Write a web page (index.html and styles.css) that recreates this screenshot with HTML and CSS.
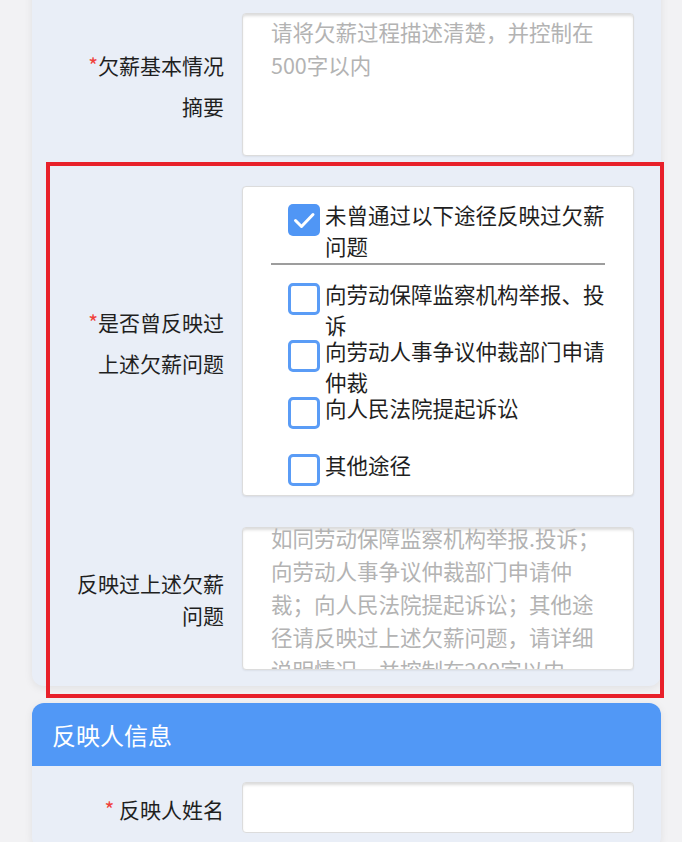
FILE: index.html
```html
<!DOCTYPE html>
<html lang="zh-CN">
<head>
  <meta charset="UTF-8">
  <title>欠薪投诉</title>
  <link rel="stylesheet" href="styles.css">
</head>
<body>
  <section class="card card-top">
    <div class="row">
      <div class="label"><span class="req">*</span>欠薪基本情况摘要</div>
      <div class="textarea">
        <div class="placeholder">请将欠薪过程描述清楚，并控制在500字以内</div>
      </div>
    </div>

    <div class="highlight">
      <div class="row">
        <div class="label"><span class="req">*</span>是否曾反映过上述欠薪问题</div>
        <div class="choices">
          <div class="choice choice-first">
            <span class="check checked">
              <svg viewBox="0 0 32 32" width="32" height="32"><path d="M7.5 16.5 L13.5 22.5 L25 10.5" fill="none" stroke="#fff" stroke-width="3" stroke-linecap="round" stroke-linejoin="round"/></svg>
            </span>
            <span class="choice-text">未曾通过以下途径反映过欠薪问题</span>
          </div>
          <div class="divider"></div>
          <div class="choice">
            <span class="check"></span>
            <span class="choice-text">向劳动保障监察机构举报、投诉</span>
          </div>
          <div class="choice">
            <span class="check"></span>
            <span class="choice-text">向劳动人事争议仲裁部门申请仲裁</span>
          </div>
          <div class="choice">
            <span class="check"></span>
            <span class="choice-text">向人民法院提起诉讼</span>
          </div>
          <div class="choice choice-last">
            <span class="check"></span>
            <span class="choice-text">其他途径</span>
          </div>
        </div>
      </div>

      <div class="row">
        <div class="label label-tight">反映过上述欠薪问题</div>
        <div class="textarea">
          <div class="placeholder scrolled">如同劳动保障监察机构举报.投诉；向劳动人事争议仲裁部门申请仲裁；向人民法院提起诉讼；其他途径请反映过上述欠薪问题，请详细说明情况，并控制在200字以内</div>
        </div>
      </div>
    </div>
  </section>

  <section class="card">
    <div class="card-head">反映人信息</div>
    <div class="card-body">
      <div class="row">
        <div class="label"><span class="req">*</span> 反映人姓名</div>
        <div class="input"></div>
      </div>
    </div>
  </section>
</body>
</html>
```

FILE: styles.css
```css
body {
  margin: 0;
  background-color: #f2f2f4;
  font-family: "Noto Sans CJK SC", "Noto Sans", sans-serif;
  color: #1f1f1f;
}
.card {
  width: 629px;
  margin-left: 32px;
  background: #e9eef7;
  border-radius: 12px;
  box-shadow: 0 2px 8px rgba(0, 0, 0, 0.08);
  overflow: visible;
}
.card-top {
  margin-top: -20px;
  padding: 33px 0 16px;
  display: flex;
  flex-direction: column;
  gap: 30px;
}
.card + .card {
  margin-top: 17px;
}
.card-head {
  height: 63px;
  line-height: 63px;
  padding-left: 20px;
  background: #5198f6;
  color: #fff;
  font-size: 24px;
  border-radius: 12px 12px 0 0;
}
.card-body {
  padding: 16px 0;
}
.highlight {
  position: relative;
  display: flex;
  flex-direction: column;
  gap: 31px;
}
/* annotation frame drawn over the two rows */
.highlight::after {
  content: "";
  position: absolute;
  top: -24px;
  bottom: -28px;
  left: 14px;
  right: -3px;
  border: 4px solid #e8202a;
  pointer-events: none;
}
.row {
  display: flex;
  align-items: center;
  gap: 18px;
  padding-left: 40px;
}
.label {
  width: 152px;
  flex: none;
  text-align: right;
  font-size: 21px;
  line-height: 41px;
  padding-top: 3px;
}
.label-tight {
  line-height: 32px;
  padding-top: 0;
}
.req {
  color: #f0403a;
}
.textarea {
  width: 392px;
  height: 143px;
  box-sizing: border-box;
  background: #fff;
  border: 1px solid #dcdcdc;
  border-radius: 4px;
  box-shadow: inset 0 3px 3px -1px rgba(0, 0, 0, 0.14), 0 1px 2px rgba(0, 0, 0, 0.06);
  padding: 0 28px;
  overflow: hidden;
}
.placeholder {
  color: #b3b3b3;
  font-size: 21.5px;
  line-height: 33px;
  margin-top: 1px;
}
.placeholder.scrolled {
  margin-top: -7px;
}
.choices {
  width: 392px;
  box-sizing: border-box;
  background: #fff;
  border: 1px solid #dcdcdc;
  border-radius: 4px;
  box-shadow: 0 1px 2px rgba(0, 0, 0, 0.08);
  padding: 12px 28px 9px;
}
.choice {
  display: flex;
  align-items: flex-start;
  gap: 5px;
  padding-left: 17px;
  height: 57px;
}
.choice-first,
.choice-last {
  height: auto;
}
.check {
  flex: none;
  width: 32px;
  height: 32px;
  box-sizing: border-box;
  margin-top: 5px;
  border: 3px solid #5a9cf6;
  border-radius: 5px;
  background: #fff;
}
.check.checked {
  border: none;
  background: #5096f5;
}
.check svg {
  display: block;
}
.choice-text {
  font-size: 21.5px;
  line-height: 31px;
  color: #1f1f1f;
}
.divider {
  height: 2px;
  background: #9d9d9d;
  margin: 2px 0 13px;
}
.input {
  width: 392px;
  height: 51px;
  box-sizing: border-box;
  background: #fff;
  border: 1px solid #dcdcdc;
  border-radius: 4px;
  box-shadow: inset 0 3px 3px -1px rgba(0, 0, 0, 0.14);
}
```
